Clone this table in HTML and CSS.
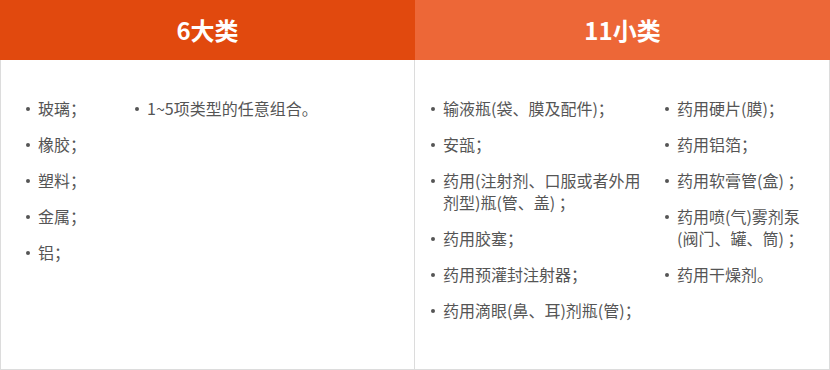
FILE: index.html
```html
<!DOCTYPE html>
<html lang="zh-CN">
<head>
<meta charset="utf-8">
<title>分类</title>
<link rel="stylesheet" href="styles.css">
</head>
<body>
<div class="table">
  <section class="panel panel-major">
    <h2 class="panel-title">6大类</h2>
    <div class="panel-body">
      <ul class="list">
        <li>玻璃；</li>
        <li>橡胶；</li>
        <li>塑料；</li>
        <li>金属；</li>
        <li>铝；</li>
      </ul>
      <ul class="list">
        <li>1~5项类型的任意组合。</li>
      </ul>
    </div>
  </section>
  <section class="panel panel-minor">
    <h2 class="panel-title">11小类</h2>
    <div class="panel-body">
      <ul class="list">
        <li>输液瓶(袋、膜及配件)；</li>
        <li>安瓿；</li>
        <li>药用(注射剂、口服或者外用剂型)瓶(管、盖) ；</li>
        <li>药用胶塞；</li>
        <li>药用预灌封注射器；</li>
        <li>药用滴眼(鼻、耳)剂瓶(管)；</li>
      </ul>
      <ul class="list">
        <li>药用硬片(膜)；</li>
        <li>药用铝箔；</li>
        <li>药用软膏管(盒) ；</li>
        <li>药用喷(气)雾剂泵(阀门、罐、筒) ；</li>
        <li>药用干燥剂。</li>
      </ul>
    </div>
  </section>
</div>
</body>
</html>
```
FILE: styles.css
```css
html, body {
  margin: 0;
  padding: 0;
  background: #fff;
}
body {
  font-family: "Noto Sans CJK SC", "Microsoft YaHei", sans-serif;
  width: 830px;
  height: 370px;
}
.table {
  display: grid;
  grid-template-columns: 415px 415px;
  height: 370px;
}
.panel {
  display: flex;
  flex-direction: column;
}
.panel-title {
  margin: 0;
  height: 60px;
  line-height: 60px;
  text-align: center;
  color: #fff;
  font-size: 24px;
  font-weight: 700;
}
.panel-major .panel-title {
  background: #e1490e;
}
.panel-minor .panel-title {
  background: #ed6737;
}
.panel-body {
  flex: 1;
  display: flex;
  align-items: flex-start;
  border-bottom: 1px solid #dcdcdc;
  border-right: 1px solid #dcdcdc;
  padding-top: 37px;
}
.panel-major .panel-body {
  border-left: 1px solid #dcdcdc;
  padding-left: 25px;
}
.panel-major .list:first-child {
  width: 109px;
}
.panel-minor .panel-body {
  padding-left: 16px;
  padding-right: 17px;
}
.panel-minor .list:first-child {
  width: 216px;
  margin-right: 18px;
}
.panel-minor .list:last-child {
  flex: 1;
}
.list {
  margin: 0;
  padding: 0;
  list-style: none;
}
.list li {
  display: flex;
  font-size: 16px;
  line-height: 22px;
  color: #555;
  margin-bottom: 14px;
}
.list li::before {
  content: "";
  flex: 0 0 4px;
  height: 4px;
  margin-top: 10px;
  margin-right: 8px;
  border-radius: 50%;
  background: #555;
}
```
